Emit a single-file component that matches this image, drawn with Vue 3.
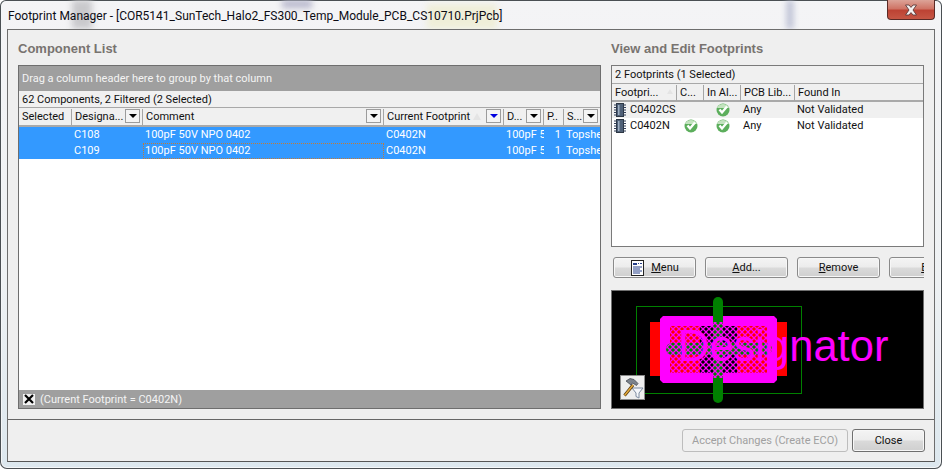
<script setup>
const componentRows = [
  { selected: '', designator: 'C108', comment: '100pF 50V NPO 0402', footprint: 'C0402N', d: '100pF 50V', p: '1', s: 'Topsheet' },
  { selected: '', designator: 'C109', comment: '100pF 50V NPO 0402', footprint: 'C0402N', d: '100pF 50V', p: '1', s: 'Topsheet', focus: true },
]

const footprintRows = [
  { name: 'C0402CS', current: false, inAll: true, lib: 'Any', found: 'Not Validated', selected: true },
  { name: 'C0402N', current: true, inAll: true, lib: 'Any', found: 'Not Validated', selected: false },
]
</script>

<template>
  <div class="window">
    <div class="glass">
      <i class="smear s1"></i><i class="smear s2"></i><i class="smear s3"></i><i class="smear s4"></i>
      <span class="win-title">Footprint Manager - [COR5141_SunTech_Halo2_FS300_Temp_Module_PCB_CS10710.PrjPcb]</span>
      <button class="win-close">
        <svg width="16" height="12" viewBox="0 0 16 12">
          <path d="M2.500 1h3.500l2 2.400 2-2.400h3.500L10 6l3.500 5H10L8 8.600 6 11H2.500L6 6z" fill="#f4f2f2" stroke="#5b3a3a" stroke-width="0.9" />
        </svg>
      </button>
    </div>

    <div class="dialog">
      <div class="main">
        <section class="left">
          <h2>Component List</h2>
          <div class="grid-box">
            <div class="group-bar">Drag a column header here to group by that column</div>
            <div class="info-row">62 Components, 2 Filtered (2 Selected)</div>
            <div class="comp-cols head">
              <div class="hcell">Selected</div>
              <div class="hcell">Designa...<span class="flt"><b></b></span></div>
              <div class="hcell">Comment<span class="flt"><b></b></span></div>
              <div class="hcell">Current Footprint<span class="sort"></span><span class="flt on"><b></b></span></div>
              <div class="hcell">D...<span class="flt"><b></b></span></div>
              <div class="hcell">P..</div>
              <div class="hcell">S...<span class="flt"><b></b></span></div>
            </div>
            <div class="comp-body">
              <div v-for="r in componentRows" :key="r.designator" class="comp-cols row">
                <div class="cell">{{ r.selected }}</div>
                <div class="cell">{{ r.designator }}</div>
                <div class="cell" :class="{ focus: r.focus }">{{ r.comment }}</div>
                <div class="cell">{{ r.footprint }}</div>
                <div class="cell">{{ r.d }}</div>
                <div class="cell num">{{ r.p }}</div>
                <div class="cell">{{ r.s }}</div>
              </div>
            </div>
            <div class="filter-bar">
              <span class="clear-x">
                <svg width="10" height="10" viewBox="0 0 10 10"><path d="M1 1l8 8M9 1L1 9" stroke="#000" stroke-width="2.200" /></svg>
              </span>
              (Current Footprint = C0402N)
            </div>
          </div>
        </section>

        <section class="right">
          <h2>View and Edit Footprints</h2>
          <div class="fp-box">
            <div class="fp-info">2 Footprints (1 Selected)</div>
            <div class="fp-cols fp-head">
              <div class="hcell">Footpri...<span class="sort small"></span></div>
              <div class="hcell">C...</div>
              <div class="hcell">In Al...</div>
              <div class="hcell">PCB Lib...</div>
              <div class="hcell">Found In</div>
            </div>
            <div v-for="f in footprintRows" :key="f.name" class="fp-cols fp-row" :class="{ sel: f.selected }">
              <div class="fp-name">
                <svg class="chip" width="12" height="14" viewBox="0 0 12 14">
                  <rect x="2.500" y="0.500" width="7" height="13" fill="#4f6077" stroke="#2d3744" />
                  <path d="M0 2h2.500M0 4.500h2.500M0 7h2.500M0 9.500h2.500M0 12h2.500M9.500 2H12M9.500 4.500H12M9.500 7H12M9.500 9.500H12M9.500 12H12" stroke="#33405a" stroke-width="1.200" />
                  <path d="M4 2h1.500v10H4z" fill="#9fb0c4" />
                </svg>
                {{ f.name }}
              </div>
              <div class="fp-check">
                <svg v-if="f.current" width="14" height="14" viewBox="0 0 14 14">
                  <circle cx="7" cy="7" r="6.500" fill="#5cae5c" />
                  <path d="M1 5a6.500 6.500 0 0 1 12 0z" fill="#c3e3bf" />
                  <path d="M3.500 6.500L6 9.500 11 3.500" fill="none" stroke="#fff" stroke-width="2.400" />
                </svg>
              </div>
              <div class="fp-check">
                <svg v-if="f.inAll" width="14" height="14" viewBox="0 0 14 14">
                  <circle cx="7" cy="7" r="6.500" fill="#5cae5c" />
                  <path d="M1 5a6.500 6.500 0 0 1 12 0z" fill="#c3e3bf" />
                  <path d="M3.500 6.500L6 9.500 11 3.500" fill="none" stroke="#fff" stroke-width="2.400" />
                </svg>
              </div>
              <div class="fp-text">{{ f.lib }}</div>
              <div class="fp-text">{{ f.found }}</div>
            </div>
          </div>

          <div class="actions">
            <button class="btn">
              <svg width="15" height="16" viewBox="0 0 15 16">
                <rect x="1.500" y="0.500" width="12" height="15" fill="#fff" stroke="#222" />
                <path d="M3 3h4v2H3zM8 3h1v1H8zM10 3h2v1h-2z" fill="#27408b" />
                <path d="M3 7h9M3 9h7M3 11h9M3 13h7" stroke="#27408b" />
              </svg>
              <span class="menu-label"><u>M</u>enu</span>
            </button>
            <button class="btn"><span><u>A</u>dd...</span></button>
            <button class="btn"><span><u>R</u>emove</span></button>
            <button class="btn"><span><u>E</u>dit</span></button>
          </div>

          <div class="preview">
            <svg width="311" height="117" viewBox="612 291 311 117">
              <defs>
                <pattern id="hatch" width="6" height="6" patternUnits="userSpaceOnUse" patternTransform="translate(670 326)">
                  <path d="M-1 -1L7 7M7 -1L-1 7" stroke="#ff00ff" stroke-width="1.300" />
                </pattern>
              </defs>
              <rect x="636.500" y="306.500" width="165" height="87" fill="none" stroke="#008000" />
              <rect x="650" y="322" width="137" height="54" fill="#ff0000" />
              <path d="M663 316h111l3 3v61l-3 3H663l-3-3v-61z" fill="#ff00ff" />
              <rect x="670" y="326" width="97" height="47" fill="#ff0000" />
              <rect x="700" y="326" width="37" height="47" fill="#000" />
              <rect x="670" y="326" width="97" height="47" fill="url(#hatch)" />
              <rect x="666" y="343" width="106" height="12" rx="6" fill="#008000" />
              <rect x="713" y="297" width="10" height="106" rx="5" fill="#008000" />
              <rect x="713" y="322" width="10" height="56" fill="url(#hatch)" />
              <rect x="666" y="343" width="106" height="12" rx="6" fill="url(#hatch)" />
              <text x="678" y="361" class="designator">Designator</text>
            </svg>
            <span class="tool">
              <svg width="22" height="22" viewBox="0 0 22 22">
                <path d="M10 11h11l-4 5v5l-3-1.500V16z" fill="#f5f7fa" stroke="#7d8ba0" />
                <path d="M2.500 18.500L11 8" stroke="#5a3d12" stroke-width="3" />
                <path d="M2.500 18.500L11 8" stroke="#e3a93a" stroke-width="1.500" />
                <path d="M4 4l4-2.500 4 1 4 4-1.500 2-4-2.500-1.500 2z" fill="#7c838c" stroke="#3a3f47" stroke-width="0.700" />
              </svg>
            </span>
          </div>
        </section>
      </div>

      <div class="footer">
        <button class="btn accept" disabled>Accept Changes (Create ECO)</button>
        <button class="btn close">Close</button>
      </div>
    </div>
  </div>
</template>

<style>
html, body {
  margin: 0;
  background: #fff;
}
</style>

<style scoped>
.window {
  width: 942px;
  height: 469px;
  box-sizing: border-box;
  padding: 0 7px 7px;
  display: flex;
  flex-direction: column;
  overflow: hidden;
  background: linear-gradient(180deg, #f4f4f6 0%, #eef1f3 60%, #dce7ee 100%);
  border-radius: 6px 6px 7px 7px;
  box-shadow: inset 0 0 0 1px #4a4f53, inset 0 0 0 2px #f4f6f8;
  font-family: Roboto, "Liberation Sans", Arial, sans-serif;
  font-size: 11px;
  color: #111;
}

.glass {
  position: relative;
  height: 29px;
  flex: none;
  display: flex;
  align-items: center;
  padding-left: 1px;
  overflow: hidden;
}

.smear {
  position: absolute;
  filter: blur(3px);
}
.s1 { left: 65px; top: 0; width: 20px; height: 29px; background: #c9c9cc; }
.s2 { left: 275px; top: 0; width: 30px; height: 8px; background: #b7b7cc; }
.s3 { left: 420px; top: 4px; width: 70px; height: 25px; background: #efeed8; }
.s4 { left: 780px; top: 0; width: 6px; height: 29px; background: #b6bad0; }

.win-title {
  position: relative;
  font-size: 12px;
  color: #0c0c14;
  white-space: nowrap;
  margin-top: 2px;
}

.win-close {
  position: absolute;
  right: 0;
  top: 0;
  width: 48px;
  height: 20px;
  padding: 0;
  display: flex;
  align-items: center;
  justify-content: center;
  background: linear-gradient(180deg, #dca398 0%, #cf7466 45%, #bd4334 55%, #c65644 100%);
  border: 1px solid #5a2a26;
  border-top: none;
  border-radius: 0 0 4px 4px;
  box-sizing: border-box;
}

.dialog {
  flex: 1;
  min-height: 0;
  display: flex;
  flex-direction: column;
  background: #efefef;
  border: 1px solid #6d6d6d;
  border-bottom-color: #555;
}

.main {
  height: 390px;
  flex: none;
  box-sizing: border-box;
  display: flex;
  gap: 10px;
  padding: 0 9px 0 10px;
  border-bottom: 1px solid #666;
}

h2 {
  margin: 0;
  height: 35px;
  flex: none;
  box-sizing: border-box;
  padding-top: 11px;
  font-family: "Liberation Sans", Arial, sans-serif;
  font-size: 13px;
  line-height: 15px;
  font-weight: 700;
  color: #78736f;
}

.left {
  width: 583px;
  flex: none;
  display: flex;
  flex-direction: column;
  height: 379px;
}

.grid-box {
  flex: 1;
  min-height: 0;
  display: flex;
  flex-direction: column;
  border: 1px solid #6e6e6e;
  background: #fff;
}

.group-bar {
  height: 25px;
  flex: none;
  line-height: 26px;
  padding-left: 3px;
  background: #9f9f9f;
  color: #f4f4f4;
}

.info-row {
  height: 17px;
  flex: none;
  line-height: 18px;
  padding-left: 3px;
  background: #f0f0f0;
  border-bottom: 1px solid #a8a8a8;
  box-sizing: border-box;
}

.comp-cols {
  display: grid;
  grid-template-columns: 53px 71px 241px 120px 40px 20px 36px;
}

.head {
  height: 19px;
  flex: none;
  box-sizing: border-box;
  background: #f0f0f0;
  border-bottom: 2px solid #a9a9a9;
  padding-right: 2px;
}

.hcell {
  position: relative;
  height: 16px;
  margin-top: 1px;
  padding-left: 3px;
  line-height: 16px;
  border-right: 1px solid #a5a5a5;
  white-space: nowrap;
  overflow: hidden;
  display: flex;
  align-items: center;
}
.hcell:last-child {
  border-right: none;
}

.flt {
  position: absolute;
  right: 2px;
  top: 0;
  width: 15px;
  height: 14px;
  box-sizing: border-box;
  display: flex;
  align-items: center;
  justify-content: center;
  border: 1px solid #9c9c9c;
  background: #f4f4f4;
}
.flt b {
  width: 0;
  height: 0;
  border-left: 4px solid transparent;
  border-right: 4px solid transparent;
  border-top: 4px solid #000;
}
.flt.on b {
  border-top-color: #0000e0;
}

.sort {
  position: absolute;
  right: 22px;
  top: 4px;
  width: 0;
  height: 0;
  border-left: 4px solid transparent;
  border-right: 4px solid transparent;
  border-bottom: 7px solid #e4e4e4;
}

.comp-body {
  flex: 1;
  min-height: 0;
  background: #fff;
}

.row {
  height: 16px;
  background: #3399ff;
  color: #fff;
  line-height: 16px;
  overflow: hidden;
}

.cell {
  padding-left: 2px;
  white-space: nowrap;
  overflow: hidden;
  box-sizing: border-box;
}
.cell.focus {
  outline: 1px dotted #c27a36;
  outline-offset: -1px;
}
.cell.num {
  text-align: right;
  padding-right: 3px;
}

.filter-bar {
  height: 18px;
  flex: none;
  background: #9f9f9f;
  color: #f4f4f4;
  display: flex;
  align-items: center;
  gap: 5px;
  padding-left: 4px;
}

.clear-x {
  width: 12px;
  height: 11px;
  display: flex;
  align-items: center;
  justify-content: center;
  background: #f2f2f2;
}

.right {
  width: 313px;
  flex: none;
  display: flex;
  flex-direction: column;
}

.fp-box {
  height: 182px;
  flex: none;
  box-sizing: border-box;
  background: #fff;
  border: 1px solid #7a7a7a;
}

.fp-info {
  height: 18px;
  line-height: 18px;
  padding-left: 3px;
  box-sizing: border-box;
  background: #f0f0f0;
  border-bottom: 1px solid #a8a8a8;
}

.fp-cols {
  display: grid;
  grid-template-columns: 65px 27px 37px 54px 1fr;
}

.fp-head {
  height: 18px;
  box-sizing: border-box;
  background: #f0f0f0;
  border-bottom: 2px solid #a9a9a9;
}

.sort.small {
  right: 3px;
  border-bottom-width: 5px;
  border-left-width: 3px;
  border-right-width: 3px;
}

.fp-row {
  height: 16px;
  line-height: 16px;
}
.fp-row.sel {
  background: #f0f0f0;
}

.fp-name {
  display: flex;
  align-items: center;
  gap: 4px;
  padding-left: 2px;
  white-space: nowrap;
}

.chip {
  flex: none;
}

.fp-check {
  display: flex;
  align-items: center;
  justify-content: center;
}

.fp-text {
  padding-left: 2px;
  white-space: nowrap;
}

.actions {
  display: flex;
  gap: 9px;
  padding: 10px 0 12px 2px;
  overflow: hidden;
  flex: none;
}

.btn {
  width: 83px;
  height: 21px;
  flex: none;
  box-sizing: border-box;
  display: flex;
  align-items: center;
  justify-content: center;
  gap: 6px;
  padding: 0;
  border: 1px solid #8a8a8a;
  border-radius: 3px;
  background: linear-gradient(180deg, #f4f4f4 0%, #ececec 48%, #dadada 52%, #cfcfcf 100%);
  font-family: inherit;
  font-size: 11px;
  color: #111;
  box-shadow: inset 0 0 0 1px #f7f7f7;
}

.preview {
  position: relative;
  height: 119px;
  flex: none;
  box-sizing: border-box;
  background: #000;
  border: 1px solid #6f6f6f;
  overflow: hidden;
}
.preview svg {
  display: block;
}

.designator {
  font-family: "Liberation Sans", Arial, sans-serif;
  font-size: 43.5px;
  fill: #ff00ff;
}

.tool {
  position: absolute;
  left: 8px;
  top: 84px;
  width: 25px;
  height: 25px;
  box-sizing: border-box;
  display: flex;
  align-items: center;
  justify-content: center;
  background: #eeeeee;
  border: 1px solid #8a8a8a;
}

.footer {
  flex: 1;
  display: flex;
  justify-content: flex-end;
  align-items: flex-start;
  gap: 4px;
  padding: 9px 9px 0 0;
}

.accept {
  width: 166px;
  height: 23px;
  background: #f0f0f0;
  border-color: #bdbdbd;
  color: #a0a0a0;
  box-shadow: none;
}

.close {
  width: 73px;
  height: 23px;
  border-color: #6f6f6f;
}
</style>
